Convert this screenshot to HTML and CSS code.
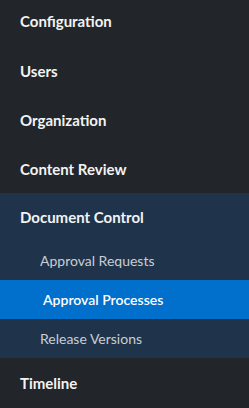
FILE: index.html
```html
<!DOCTYPE html>
<html>
<head>
<meta charset="utf-8">
<link rel="stylesheet" href="styles.css">
</head>
<body>
<nav class="nav">
  <a class="item first">Configuration</a>
  <a class="item">Users</a>
  <a class="item">Organization</a>
  <a class="item">Content Review</a>
  <div class="group">
    <a class="item">Document Control</a>
    <a class="sub">Approval Requests</a>
    <a class="sub active">Approval Processes</a>
    <a class="sub">Release Versions</a>
  </div>
  <a class="item">Timeline</a>
</nav>
</body>
</html>
```
FILE: styles.css
```css
html, body {
  margin: 0;
  padding: 0;
  background: #222529;
  height: 100%;
  overflow: hidden;
}
.nav {
  display: flex;
  flex-direction: column;
  margin-top: -4px;
  font-family: Lato, "Liberation Sans", sans-serif;
}
.item {
  display: flex;
  align-items: center;
  height: 49px;
  padding-left: 20px;
  font-size: 15px;
  font-weight: 700;
  color: #f2f3f4;
}
.item.first {
  height: 50px;
}
.group {
  display: flex;
  flex-direction: column;
  background: #1f344b;
}
.group .item {
  height: 48px;
}
.sub {
  display: flex;
  align-items: center;
  height: 39px;
  padding-left: 40px;
  font-size: 14px;
  color: #c9ced4;
}
.sub.active {
  background: #0070cc;
  color: #ffffff;
  font-weight: 600;
  padding-left: 43px;
}
```
